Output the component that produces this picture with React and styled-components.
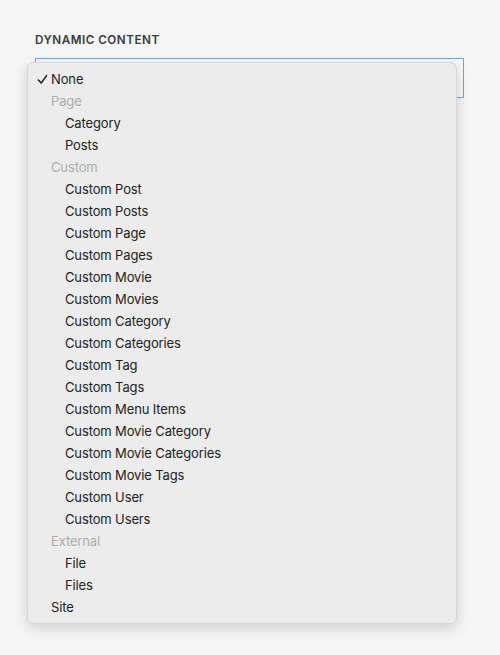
import styled, { createGlobalStyle } from 'styled-components'

const GlobalStyle = createGlobalStyle`
    html, body {
        margin: 0;
        background: #f5f5f5;
    }
`;

const items = [
    { label: 'None', checked: true },
    { label: 'Page', group: true },
    { label: 'Category', nested: true },
    { label: 'Posts', nested: true },
    { label: 'Custom', group: true },
    { label: 'Custom Post', nested: true },
    { label: 'Custom Posts', nested: true },
    { label: 'Custom Page', nested: true },
    { label: 'Custom Pages', nested: true },
    { label: 'Custom Movie', nested: true },
    { label: 'Custom Movies', nested: true },
    { label: 'Custom Category', nested: true },
    { label: 'Custom Categories', nested: true },
    { label: 'Custom Tag', nested: true },
    { label: 'Custom Tags', nested: true },
    { label: 'Custom Menu Items', nested: true },
    { label: 'Custom Movie Category', nested: true },
    { label: 'Custom Movie Categories', nested: true },
    { label: 'Custom Movie Tags', nested: true },
    { label: 'Custom User', nested: true },
    { label: 'Custom Users', nested: true },
    { label: 'External', group: true },
    { label: 'File', nested: true },
    { label: 'Files', nested: true },
    { label: 'Site' },
];

const App = () => {
    return (
        <Page>
            <GlobalStyle />
            <Label>Dynamic Content</Label>
            <Field>
                <SelectBox />
                <Menu>
                    {items.map(item => (
                        <Option key={item.label} $group={item.group} $nested={item.nested}>
                            {item.checked && (
                                <Check viewBox="0 0 12 12">
                                    <path d="M1.5 6.5 L4.6 9.8 L10.5 1.8" />
                                </Check>
                            )}
                            {item.label}
                        </Option>
                    ))}
                </Menu>
            </Field>
        </Page>
    )
}

const Page = styled.div`
    padding: 33px 36px 0 35px;
    height: 655px;
    box-sizing: border-box;
`;

const Label = styled.div`
    font-family: "Inter", "Noto Sans", sans-serif;
    font-weight: 600;
    font-size: 11.7px;
    letter-spacing: 0.5px;
    text-transform: uppercase;
    color: #3a3a3a;
    line-height: 14px;
    margin-bottom: 11px;
`;

const Field = styled.div`
    position: relative;
`;

const SelectBox = styled.div`
    height: 40px;
    width: 429px;
    box-sizing: border-box;
    border: 1px solid #62a8ee;
    background: #f7f7f7;
`;

const Menu = styled.div`
    position: absolute;
    top: 4px;
    left: -8px;
    width: 430px;
    box-sizing: border-box;
    padding: 5px 0 5px;
    background: #ececec;
    border: 1px solid #d6d6d6;
    border-radius: 7px;
    box-shadow: 0 4px 14px rgba(0, 0, 0, 0.16);
`;

const Option = styled.div`
    position: relative;
    height: 22px;
    line-height: 22px;
    font-family: "Inter", "Noto Sans", sans-serif;
    font-size: 13px;
    letter-spacing: -0.13px;
    color: ${p => (p.$group ? '#acacac' : '#222')};
    padding-left: ${p => (p.$nested ? '37px' : '23px')};
`;

const Check = styled.svg`
    position: absolute;
    left: 9px;
    top: 6px;
    width: 11px;
    height: 11px;
    fill: none;
    stroke: #222;
    stroke-width: 1.7;
    stroke-linecap: round;
    stroke-linejoin: round;
`;

export default App;
